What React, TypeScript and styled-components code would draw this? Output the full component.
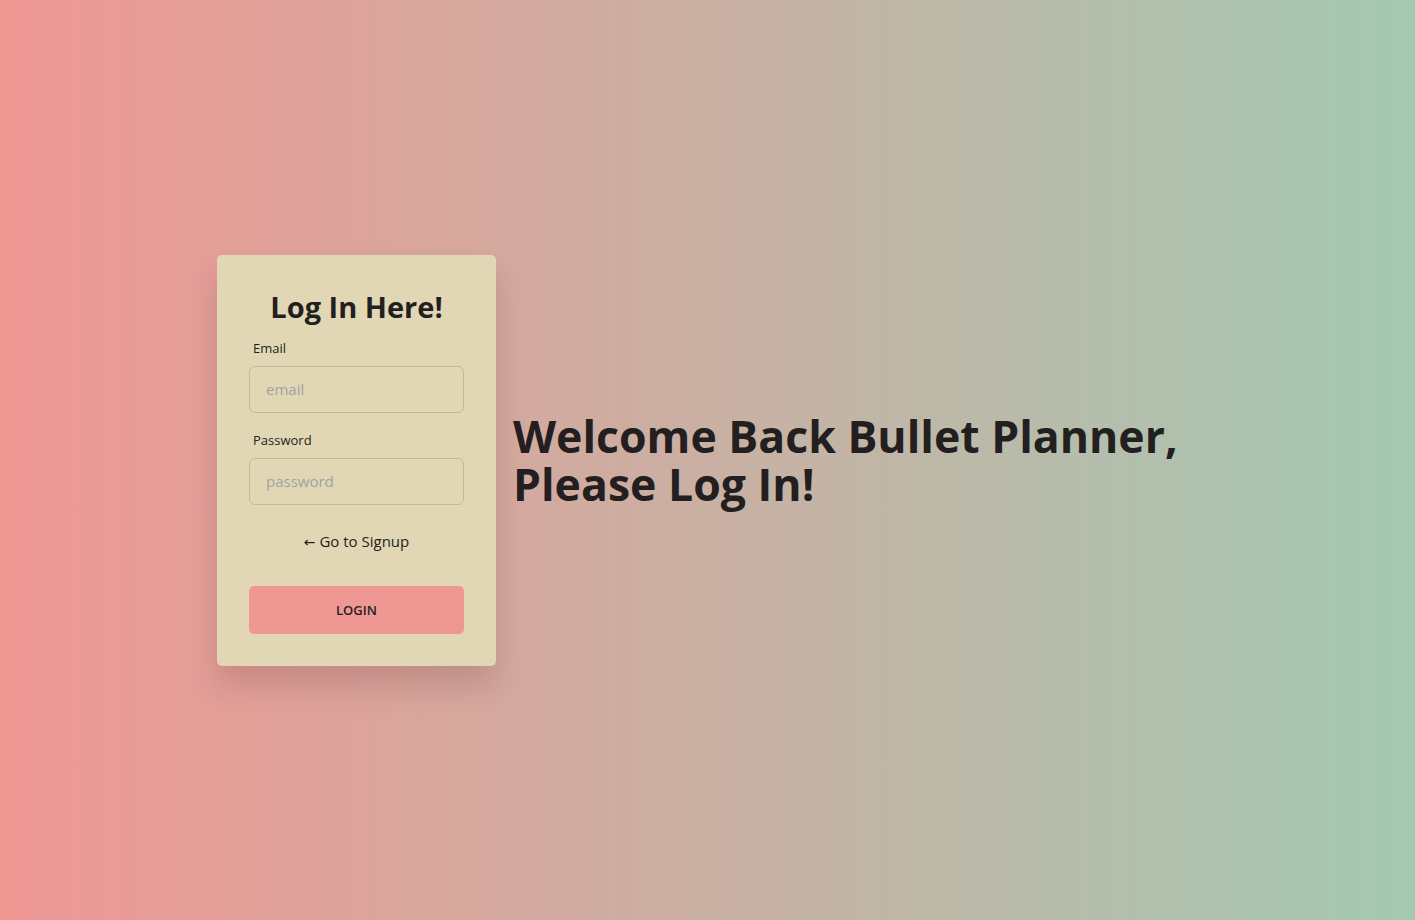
import React from 'react';
import styled, { createGlobalStyle } from 'styled-components';

const GlobalStyle = createGlobalStyle`
  html, body {
    margin: 0;
    padding: 0;
  }
  body {
    font-family: 'Open Sans', 'Noto Sans', sans-serif;
    color: #231f20;
  }
  * {
    box-sizing: border-box;
  }
`;

export default function App() {
  return (
    <>
      <GlobalStyle />
      <StylePage>
        <StyleCard>
          <Title>Log In Here!</Title>
          <Field>
            <Label htmlFor="email">Email</Label>
            <Input id="email" type="email" placeholder="email" />
          </Field>
          <Field>
            <Label htmlFor="password">Password</Label>
            <Input id="password" type="password" placeholder="password" />
          </Field>
          <SignupLink href="#">
            <Arrow>←</Arrow> Go to Signup
          </SignupLink>
          <LoginButton type="button">LOGIN</LoginButton>
        </StyleCard>
        <Welcome>
          Welcome Back Bullet Planner,
          <br />
          Please Log In!
        </Welcome>
      </StylePage>
    </>
  );
}

const StylePage = styled.div`
  display: flex;
  align-items: center;
  gap: 17px;
  width: 100%;
  height: 920px;
  padding-left: 217px;
  background: linear-gradient(90deg, #ef9793 0%, #a4c9b3 100%);
`;

const StyleCard = styled.div`
  display: flex;
  flex-direction: column;
  width: 279px;
  padding: 32px;
  background-color: #e2d7b4;
  border-radius: 5px;
  box-shadow: 0 20px 30px rgba(90, 40, 40, 0.18);
`;

const Title = styled.h2`
  margin: 0 0 12px;
  text-align: center;
  font-size: 29px;
  font-weight: 700;
  line-height: 40px;
`;

const Field = styled.div`
  display: flex;
  flex-direction: column;
  margin-bottom: 18px;
`;

const Label = styled.label`
  margin: 0 0 9px 4px;
  font-size: 13px;
  line-height: 18px;
`;

const Input = styled.input`
  width: 100%;
  height: 47px;
  padding: 0 16px;
  font-family: inherit;
  font-size: 15px;
  background-color: transparent;
  border: 1px solid #c5b895;
  border-radius: 6px;
  outline: none;

  &::placeholder {
    color: #9ea3a8;
  }
`;

const SignupLink = styled.a`
  display: block;
  margin: 7px 0 33px;
  text-align: center;
  font-size: 15px;
  line-height: 22px;
  color: #231f20;
  text-decoration: none;
`;

const Arrow = styled.span`
  font-family: 'DejaVu Sans', sans-serif;
  font-size: 14px;
`;

const LoginButton = styled.button`
  width: 100%;
  height: 48px;
  border: none;
  border-radius: 5px;
  background-color: #ef9793;
  color: #231f20;
  font-family: inherit;
  font-size: 13px;
  font-weight: 600;
  cursor: pointer;
`;

const Welcome = styled.h1`
  margin: 0;
  font-size: 44.6px;
  font-weight: 700;
  line-height: 48px;
`;
